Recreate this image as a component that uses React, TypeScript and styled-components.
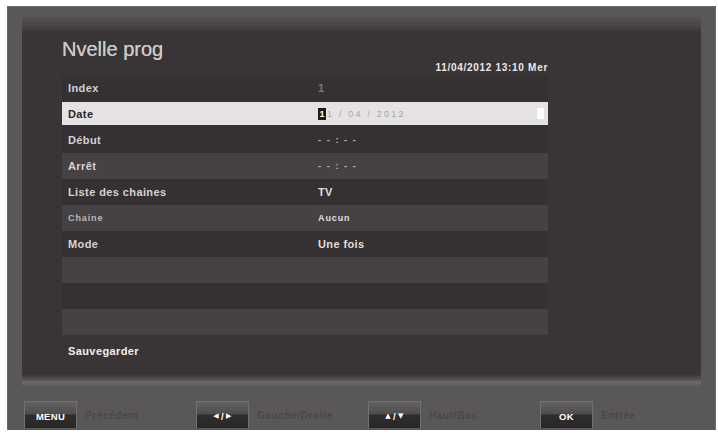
import React from 'react';
import styled, {createGlobalStyle} from 'styled-components';

type Tone = 'dark' | 'light' | 'active';

interface Item {
    label: string;
    value?: React.ReactNode;
    tone: Tone;
    small?: boolean;
}

const GlobalStyle = createGlobalStyle`
  html, body {
    margin: 0;
    padding: 0;
    background: #ffffff;
  }

  body {
    font-family: "Liberation Sans", Arial, sans-serif;
  }
`

const Frame = styled.div`
  margin: 6px 0 0 7px;
  width: 709px;
  height: 424px;
  box-sizing: border-box;
  padding: 10px 14px 0 14px;
  background: #5a5758;
  border: 1px solid #6b6869;
  border-bottom: none;
  overflow: hidden;
  display: flex;
  flex-direction: column;
`

const Panel = styled.div`
  height: 360px;
  background: #393536;
  display: flex;
  flex-direction: column;
`

const TopBar = styled.div`
  height: 14px;
  background: linear-gradient(#555152, #4a4647 60%, #3e3a3b);
`

const Body = styled.div`
  padding: 0 153px 0 40px;
  display: flex;
  flex-direction: column;
`

const Header = styled.div`
  height: 44px;
  display: flex;
  justify-content: space-between;
  align-items: flex-start;
`

const Title = styled.h1`
  margin: 7px 0 0;
  font-size: 20px;
  line-height: 22px;
  font-weight: normal;
  color: #cdc9c9;
  text-shadow: 0 0 0.6px #cdc9c9;
`

const Clock = styled.div`
  margin-top: 31px;
  font-size: 10px;
  letter-spacing: 0.7px;
  line-height: 12px;
  font-weight: bold;
  color: #ebe7e7;
`

const Row = styled.div<{ $tone: Tone }>`
  height: 26px;
  box-sizing: border-box;
  display: grid;
  grid-template-columns: 250px 1fr auto;
  align-items: center;
  padding: 0 4px 0 6px;
  background: ${p => p.$tone === 'light' ? '#464243' : p.$tone === 'active' ? '#e4e2e2' : '#353132'};
  border-top: ${p => p.$tone === 'active' ? '1px solid #353132' : 'none'};
  border-bottom: ${p => p.$tone === 'active' ? '2px solid #353132' : 'none'};
`

const Label = styled.span<{ $active?: boolean; $small?: boolean }>`
  font-size: ${p => p.$small ? '9px' : '11px'};
  letter-spacing: ${p => p.$small ? '0.9px' : '0.4px'};
  font-weight: bold;
  color: ${p => p.$active ? '#2a2627' : p.$small ? '#bcb8b8' : '#d6d2d2'};
`

const Value = styled.span<{ $muted?: boolean; $small?: boolean }>`
  font-size: ${p => p.$small ? '9px' : '11px'};
  letter-spacing: ${p => p.$small ? '0.9px' : '0.4px'};
  font-weight: bold;
  color: ${p => p.$muted ? '#7a7677' : '#e2dede'};
`

const Spaced = styled.span`
  font-size: 9px;
  font-weight: bold;
  letter-spacing: 1.6px;
  color: #c2bebe;
`

const DateValue = styled.span`
  display: flex;
  align-items: center;
  font-size: 9px;
  letter-spacing: 2.2px;
  color: #aaa6a7;
`

const Cursor = styled.span`
  display: inline-block;
  width: 8px;
  height: 12px;
  margin-right: 1px;
  background: #1c1a1b;
  color: #ffffff;
  font-weight: bold;
  font-size: 9px;
  letter-spacing: 0;
  line-height: 12px;
  text-align: center;
`

const Marker = styled.span`
  width: 7px;
  height: 11px;
  background: #fbfbfb;
`

const Save = styled.div`
  margin-top: 9px;
  padding-left: 6px;
  font-size: 11px;
  letter-spacing: 0.4px;
  line-height: 14px;
  font-weight: bold;
  color: #f2eeee;
`

const Band = styled.div`
  height: 11px;
  background: linear-gradient(#3f3b3c, #4e4b4c 35%, #6d6a6b 65%, #5d5a5b);
`

const Footer = styled.div`
  display: grid;
  grid-template-columns: repeat(4, 172px);
  padding: 15px 0 0 2px;
`

const Group = styled.div`
  display: flex;
  align-items: flex-start;
  gap: 8px;
`

const Key = styled.div`
  width: 53px;
  height: 27px;
  box-sizing: border-box;
  padding-top: 2px;
  border: 1px solid #727071;
  border-bottom: none;
  background: linear-gradient(#646162 0, #504d4e 45%, #302d2e 50%, #2a2728 100%);
  display: flex;
  align-items: center;
  justify-content: center;
  gap: 2px;
  color: #ffffff;
  font-size: 9.5px;
  letter-spacing: 0.3px;
  font-weight: bold;
`

const Arrow = styled.span`
  font-family: "DejaVu Sans", sans-serif;
  font-size: 7px;
`

const Hint = styled.span`
  line-height: 29px;
  font-size: 10px;
  letter-spacing: 0.6px;
  font-weight: bold;
  color: #4b4748;
`

const items: Item[] = [
    {label: 'Index', value: <Value $muted>1</Value>, tone: 'dark'},
    {
        label: 'Date',
        value: <DateValue><Cursor>1</Cursor>1 / 04 / 2012</DateValue>,
        tone: 'active'
    },
    {label: 'Début', value: <Spaced>- - : - -</Spaced>, tone: 'dark'},
    {label: 'Arrêt', value: <Spaced>- - : - -</Spaced>, tone: 'light'},
    {label: 'Liste des chaines', value: <Value>TV</Value>, tone: 'dark'},
    {label: 'Chaine', value: <Value $small>Aucun</Value>, tone: 'light', small: true},
    {label: 'Mode', value: <Value>Une fois</Value>, tone: 'dark'},
    {label: '', tone: 'light'},
    {label: '', tone: 'dark'},
    {label: '', tone: 'light'},
];

const keys = [
    {key: <>MENU</>, hint: 'Précédent'},
    {key: <><Arrow>◀</Arrow>/<Arrow>▶</Arrow></>, hint: 'Gauche/Droite'},
    {key: <><Arrow>▲</Arrow>/<Arrow>▼</Arrow></>, hint: 'Haut/Bas'},
    {key: <>OK</>, hint: 'Entrée'},
];

export default function App() {
    return (
        <>
            <GlobalStyle/>
            <Frame>
                <Panel>
                    <TopBar/>
                    <Body>
                        <Header>
                            <Title>Nvelle prog</Title>
                            <Clock>11/04/2012 13:10 Mer</Clock>
                        </Header>
                        {items.map((it, i) => (
                            <Row key={i} $tone={it.tone}>
                                <Label $active={it.tone === 'active'} $small={it.small}>{it.label}</Label>
                                {it.value ?? <span/>}
                                {it.tone === 'active' ? <Marker/> : <span/>}
                            </Row>
                        ))}
                        <Save>Sauvegarder</Save>
                    </Body>
                </Panel>
                <Band/>
                <Footer>
                    {keys.map(k => (
                        <Group key={k.hint}>
                            <Key>{k.key}</Key>
                            <Hint>{k.hint}</Hint>
                        </Group>
                    ))}
                </Footer>
            </Frame>
        </>
    );
}
